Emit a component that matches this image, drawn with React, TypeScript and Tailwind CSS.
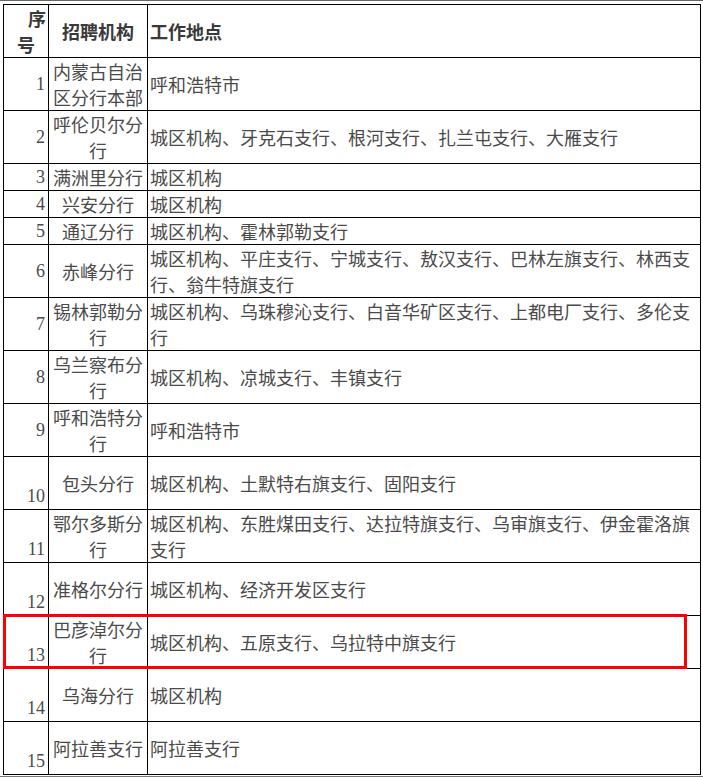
const rows: { no: string; org: string; place: string; tall: boolean; bottom?: boolean }[] = [
  { no: "1", org: "内蒙古自治区分行本部", place: "呼和浩特市", tall: true },
  { no: "2", org: "呼伦贝尔分行", place: "城区机构、牙克石支行、根河支行、扎兰屯支行、大雁支行", tall: true },
  { no: "3", org: "满洲里分行", place: "城区机构", tall: false },
  { no: "4", org: "兴安分行", place: "城区机构", tall: false },
  { no: "5", org: "通辽分行", place: "城区机构、霍林郭勒支行", tall: false },
  { no: "6", org: "赤峰分行", place: "城区机构、平庄支行、宁城支行、敖汉支行、巴林左旗支行、林西支行、翁牛特旗支行", tall: true },
  { no: "7", org: "锡林郭勒分行", place: "城区机构、乌珠穆沁支行、白音华矿区支行、上都电厂支行、多伦支行", tall: true },
  { no: "8", org: "乌兰察布分行", place: "城区机构、凉城支行、丰镇支行", tall: true },
  { no: "9", org: "呼和浩特分行", place: "呼和浩特市", tall: true },
  { no: "10", org: "包头分行", place: "城区机构、土默特右旗支行、固阳支行", tall: true, bottom: true },
  { no: "11", org: "鄂尔多斯分行", place: "城区机构、东胜煤田支行、达拉特旗支行、乌审旗支行、伊金霍洛旗支行", tall: true, bottom: true },
  { no: "12", org: "准格尔分行", place: "城区机构、经济开发区支行", tall: true, bottom: true },
  { no: "13", org: "巴彦淖尔分行", place: "城区机构、五原支行、乌拉特中旗支行", tall: true, bottom: true },
  { no: "14", org: "乌海分行", place: "城区机构", tall: true, bottom: true },
  { no: "15", org: "阿拉善支行", place: "阿拉善支行", tall: true, bottom: true },
];

const cjk = "font-['Noto_Sans_CJK_SC',sans-serif]";

export default function App() {
  return (
    <div className={`w-[703px] h-[777px] bg-white relative overflow-hidden ${cjk} text-[18px] leading-[26px] text-[#4a4a4a]`}>
      <div className="h-px bg-[#666]" />
      <div className="pt-[3px] pl-[3px] pr-[2px]">
        <table className="w-[698px] table-fixed border-collapse">
          <colgroup>
            <col className="w-[45px]" />
            <col className="w-[99px]" />
            <col />
          </colgroup>
          <thead>
            <tr className="h-[53px] font-bold text-[#3a3a3a]">
              <th className="border border-black p-0 align-middle">
                <div className="text-right pr-[2px]">序</div>
                <div className="text-left pl-[13px]">号</div>
              </th>
              <th className="border border-black p-0 align-middle text-center">招聘机构</th>
              <th className="border border-black p-0 pl-[2px] align-middle text-left">工作地点</th>
            </tr>
          </thead>
          <tbody>
            {rows.map((r) => (
              <tr key={r.no} className={r.tall ? "h-[53px]" : "h-[27px]"}>
                <td
                  className={`border border-black p-0 pr-[3px] text-right font-['Liberation_Serif',serif] ${
                    r.bottom ? "align-bottom" : "align-middle"
                  }`}
                >
                  {r.no}
                </td>
                <td className="border border-black p-0 px-[2px] text-center align-middle">{r.org}</td>
                <td className="border border-black p-0 pl-[2px] align-middle">{r.place}</td>
              </tr>
            ))}
          </tbody>
        </table>
      </div>
      <div className="h-px bg-[#777] mt-px" />
      <div className="absolute left-[3px] top-[614px] w-[684px] h-[55px] border-[3px] border-[#ff0000]" />
    </div>
  );
}
